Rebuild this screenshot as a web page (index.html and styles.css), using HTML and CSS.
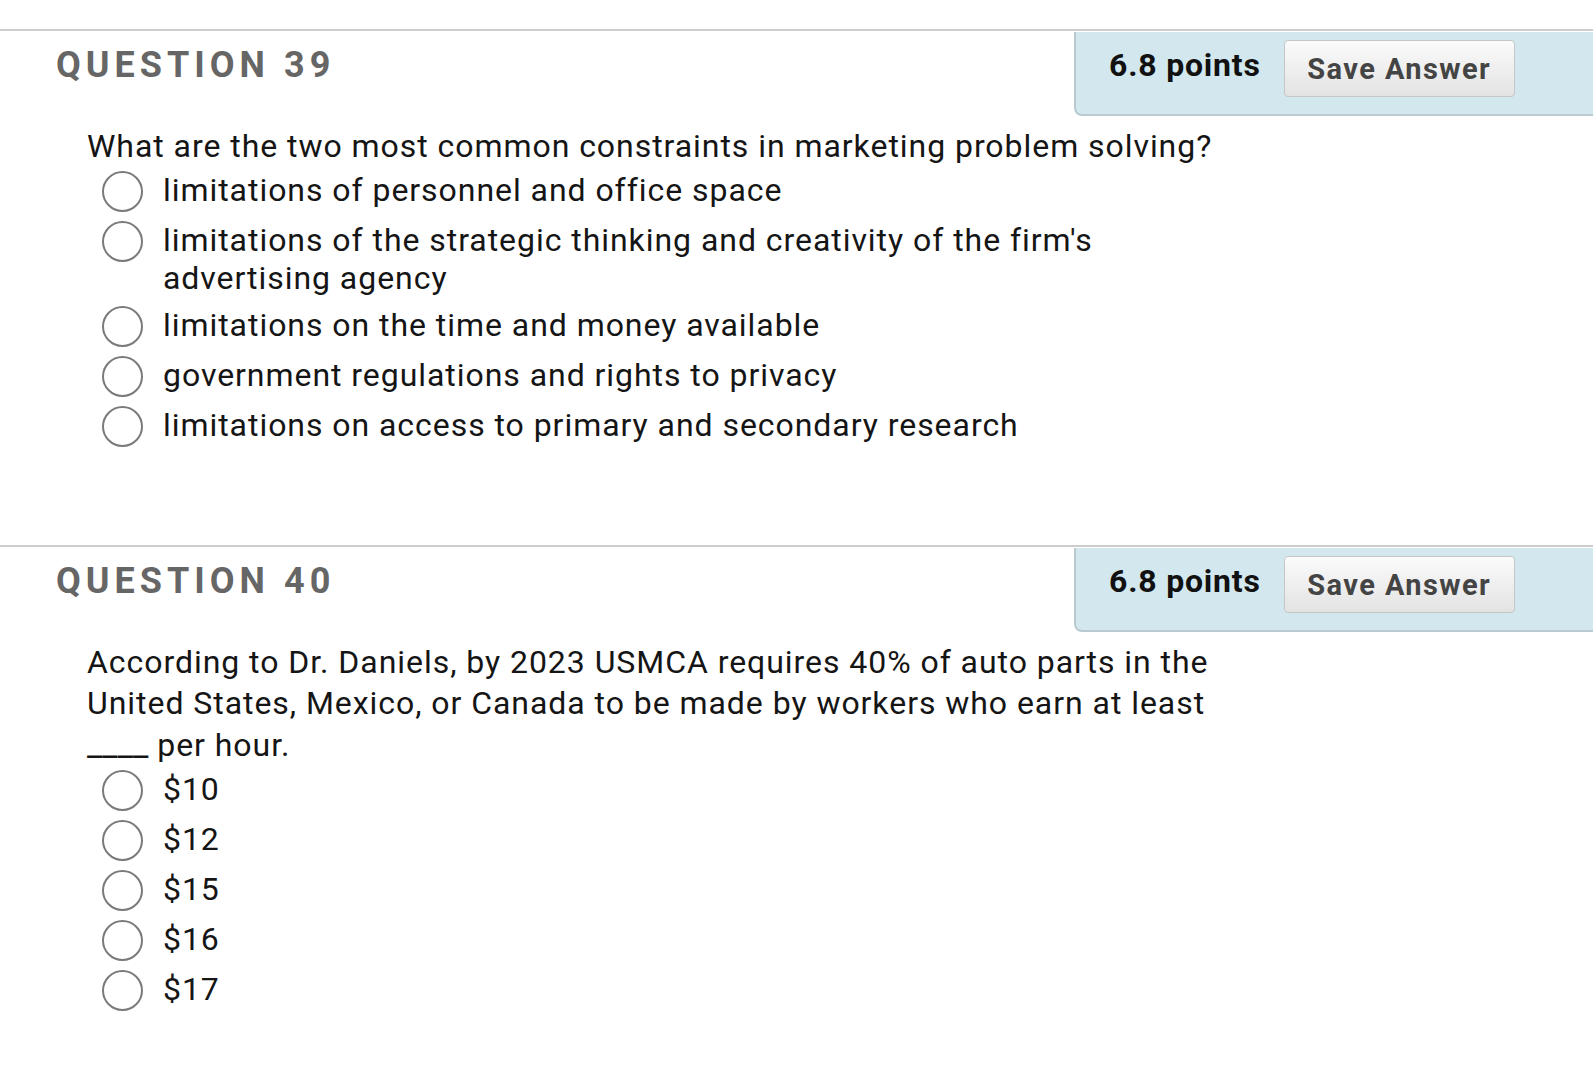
FILE: index.html
```html
<!DOCTYPE html>
<html lang="en">
<head>
<meta charset="utf-8">
<title>Questions</title>
<link rel="stylesheet" href="styles.css">
</head>
<body>
<div class="page">
  <section class="question">
    <div class="q-head">
      <h3 class="q-title">QUESTION 39</h3>
      <div class="q-meta">
        <span class="q-points">6.8 points</span>
        <button class="save-btn" type="button">Save Answer</button>
      </div>
    </div>
    <div class="q-body">
      <p class="q-text">What are the two most common constraints in marketing problem solving?</p>
      <ul class="options">
        <li class="option"><span class="radio"></span><span class="opt-label">limitations of personnel and office space</span></li>
        <li class="option"><span class="radio"></span><span class="opt-label">limitations of the strategic thinking and creativity of the firm's advertising agency</span></li>
        <li class="option"><span class="radio"></span><span class="opt-label">limitations on the time and money available</span></li>
        <li class="option"><span class="radio"></span><span class="opt-label">government regulations and rights to privacy</span></li>
        <li class="option"><span class="radio"></span><span class="opt-label">limitations on access to primary and secondary research</span></li>
      </ul>
    </div>
  </section>
  <section class="question">
    <div class="q-head">
      <h3 class="q-title">QUESTION 40</h3>
      <div class="q-meta">
        <span class="q-points">6.8 points</span>
        <button class="save-btn" type="button">Save Answer</button>
      </div>
    </div>
    <div class="q-body">
      <p class="q-text">According to Dr. Daniels, by 2023 USMCA requires 40% of auto parts in the United States, Mexico, or Canada to be made by workers who earn at least <span class="blank">____</span> per hour.</p>
      <ul class="options">
        <li class="option"><span class="radio"></span><span class="opt-label">$10</span></li>
        <li class="option"><span class="radio"></span><span class="opt-label">$12</span></li>
        <li class="option"><span class="radio"></span><span class="opt-label">$15</span></li>
        <li class="option"><span class="radio"></span><span class="opt-label">$16</span></li>
        <li class="option"><span class="radio"></span><span class="opt-label">$17</span></li>
      </ul>
    </div>
  </section>
</div>
</body>
</html>
```

FILE: styles.css
```css
html, body {
  margin: 0;
  padding: 0;
  background: #ffffff;
}

body {
  font-family: Roboto, "Liberation Sans", Arial, sans-serif;
  color: #1a1a1a;
}

.page {
  padding-top: 29px;
}

.question {
  border-top: 2px solid #cdcdcd;
  padding-bottom: 89px;
}

.q-head {
  display: flex;
  justify-content: space-between;
  align-items: flex-start;
}

.q-title {
  margin: 14px 0 0 56px;
  font-size: 36px;
  line-height: 40px;
  font-weight: 700;
  letter-spacing: 5px;
  color: #666666;
}

.q-meta {
  box-sizing: border-box;
  width: 519px;
  height: 84px;
  margin-top: 1px;
  display: flex;
  align-items: flex-start;
  padding-left: 33px;
  background: #d2e8ee;
  border-left: 2px solid #b9cbd0;
  border-bottom: 2px solid #b9cbd0;
  border-bottom-left-radius: 8px;
}

.q-points {
  margin-top: 14px;
  font-size: 32px;
  line-height: 38px;
  font-weight: 700;
  letter-spacing: 0.8px;
  color: #111111;
}

.save-btn {
  box-sizing: border-box;
  width: 231px;
  height: 57px;
  margin: 8px 0 0 23px;
  padding: 0;
  font-family: Roboto, "Liberation Sans", Arial, sans-serif;
  font-size: 29px;
  font-weight: 700;
  letter-spacing: 1.4px;
  color: #444444;
  background: linear-gradient(#fbfbfb, #e3e3e3);
  border: 1px solid #c6c6c6;
  border-radius: 4px;
}

.q-body {
  width: 1156px;
  padding-left: 87px;
}

.q-text {
  margin: 10px 0 0;
  font-size: 32px;
  line-height: 41px;
  letter-spacing: 0.95px;
  color: #151515;
}

.blank {
  font-size: 34px;
  letter-spacing: 0;
}

.options {
  list-style: none;
  margin: 4px 0 0 15px;
  padding: 0;
}

.option {
  display: flex;
  align-items: flex-start;
  gap: 20px;
  margin-bottom: 9px;
}

.radio {
  flex: none;
  box-sizing: border-box;
  width: 41px;
  height: 41px;
  border: 2.5px solid #7a7a7a;
  border-radius: 50%;
  background: #ffffff;
}

.opt-label {
  flex: 1;
  font-size: 32px;
  line-height: 38px;
  letter-spacing: 0.95px;
  color: #151515;
}
```
